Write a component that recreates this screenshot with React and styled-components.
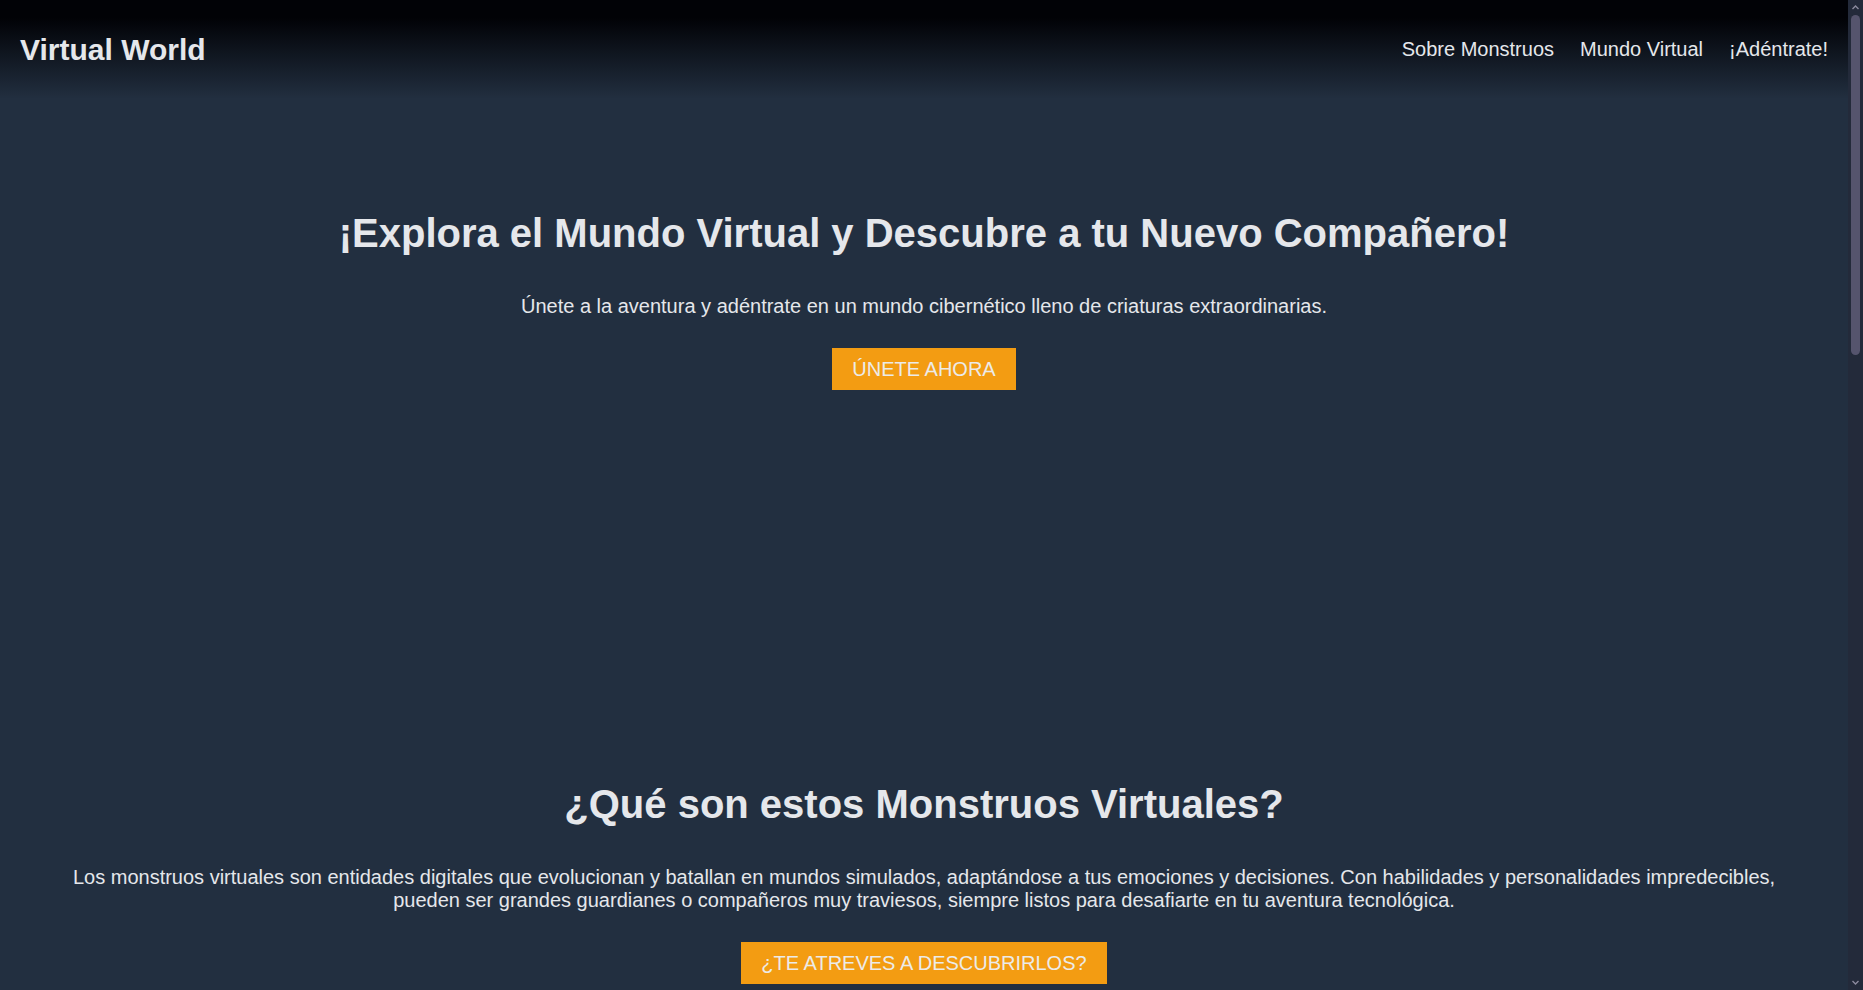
import React from "react";
import styled, { createGlobalStyle } from "styled-components";

const GlobalStyle = createGlobalStyle`
  html, body {
    margin: 0;
    height: 100%;
    overflow: hidden;
  }
  body {
    background-color: #222f40;
    color: #e5e7eb;
    font-family: "Liberation Sans", Arial, sans-serif;
  }
  * {
    box-sizing: border-box;
  }
`;

const Frame = styled.div`
  height: 100vh;
  display: flex;
  flex-direction: row;
  background-color: #222f40;
`;

const Page = styled.div`
  flex: 1;
  min-width: 0;
  height: 100%;
  overflow-y: auto;
  scrollbar-width: none;
  &::-webkit-scrollbar {
    display: none;
  }
`;

/* drawing of the browser's dark scrollbar seen in the screenshot */
const Rail = styled.div`
  width: 15px;
  height: 100%;
  flex-shrink: 0;
  display: flex;
  flex-direction: column;
  align-items: center;
  background-color: #232a3a;
`;

const RailArrow = styled.svg`
  width: 15px;
  height: 15px;
  flex-shrink: 0;
`;

const RailTrack = styled.div`
  flex: 1;
  width: 100%;
  padding: 0 3px;
`;

const Thumb = styled.div`
  width: 100%;
  height: ${(p) => p.$size}px;
  border-radius: 5px;
  background-color: #55546d;
`;

const Header = styled.header`
  height: 99px;
  padding: 0 20px;
  display: flex;
  flex-direction: row;
  align-items: center;
  justify-content: space-between;
  background: linear-gradient(to bottom, #010206 18%, rgba(1, 2, 6, 0) 100%);
`;

const Brand = styled.h1`
  margin: 0;
  font-size: 30px;
  font-weight: bold;
  color: #e5e7eb;
`;

const Nav = styled.nav`
  display: flex;
  flex-direction: row;
  gap: 26px;
`;

const NavLink = styled.a`
  font-size: 20px;
  color: #e5e7eb;
  text-decoration: none;
`;

const Hero = styled.section`
  min-height: 683px;
  padding: 112px 20px 0;
  display: flex;
  flex-direction: column;
  align-items: center;
  text-align: center;
`;

const Section = styled.section`
  min-height: ${(p) => p.$minHeight || "auto"};
  padding: ${(p) => p.$padding || "0 50px"};
  display: flex;
  flex-direction: column;
  align-items: center;
  text-align: center;
`;

const Title = styled.h2`
  margin: 0 0 39px;
  font-size: 40px;
  font-weight: bold;
  color: #e5e7eb;
`;

const Text = styled.p`
  margin: 0 0 30px;
  font-size: 20px;
  color: #e5e7eb;
`;

const Button = styled.button`
  border: none;
  border-radius: 0;
  padding: 9.6px 20px;
  background-color: #f39c12;
  color: #ecebe8;
  font-family: "Liberation Sans", Arial, sans-serif;
  font-size: 20px;
  cursor: pointer;
`;

const CardGrid = styled.div`
  width: 100%;
  max-width: 1200px;
  display: grid;
  grid-template-columns: repeat(3, 1fr);
  gap: 30px;
`;

const Card = styled.div`
  height: 300px;
  padding: 24px;
  background-color: #2b3a4f;
  display: flex;
  flex-direction: column;
  justify-content: flex-end;
  font-size: 20px;
`;

const Footer = styled.footer`
  height: 75px;
  display: flex;
  align-items: center;
  justify-content: center;
  font-size: 16px;
  color: #9ca3af;
  background: linear-gradient(to top, #010206, rgba(1, 2, 6, 0));
`;

const worlds = ["Bosque Binario", "Océano de Datos", "Ciudad Neón"];

function ScrollRail() {
  return (
    <Rail aria-hidden="true">
      <RailArrow viewBox="0 0 15 15">
        <path d="M4.5 9 L7.5 6 L10.5 9" fill="none" stroke="#8b8a9e" strokeWidth="1.4" />
      </RailArrow>
      <RailTrack>
        <Thumb $size={340} />
      </RailTrack>
      <RailArrow viewBox="0 0 15 15">
        <path d="M4.5 6 L7.5 9 L10.5 6" fill="none" stroke="#8b8a9e" strokeWidth="1.4" />
      </RailArrow>
    </Rail>
  );
}

export default function App() {
  return (
    <>
      <GlobalStyle />
      <Frame>
        <Page>
          <Header>
            <Brand>Virtual World</Brand>
            <Nav>
              <NavLink href="#monstruos">Sobre Monstruos</NavLink>
              <NavLink href="#mundo">Mundo Virtual</NavLink>
              <NavLink href="#adentrate">¡Adéntrate!</NavLink>
            </Nav>
          </Header>

          <Hero>
            <Title as="h1">¡Explora el Mundo Virtual y Descubre a tu Nuevo Compañero!</Title>
            <Text>Únete a la aventura y adéntrate en un mundo cibernético lleno de criaturas extraordinarias.</Text>
            <Button>ÚNETE AHORA</Button>
          </Hero>

          <Section id="monstruos" $padding="0 50px 120px">
            <Title>¿Qué son estos Monstruos Virtuales?</Title>
            <Text>
              Los monstruos virtuales son entidades digitales que evolucionan y batallan en mundos simulados, adaptándose a tus emociones y decisiones. Con habilidades y personalidades impredecibles, pueden ser grandes guardianes o compañeros muy traviesos, siempre listos para desafiarte en tu aventura tecnológica.
            </Text>
            <Button>¿TE ATREVES A DESCUBRIRLOS?</Button>
          </Section>

          <Section id="mundo" $minHeight="1000px" $padding="120px 50px">
            <Title>Mundo Virtual</Title>
            <Text>Recorre paisajes digitales donde cada rincón esconde un nuevo compañero.</Text>
            <CardGrid>
              {worlds.map((w) => (
                <Card key={w}>{w}</Card>
              ))}
            </CardGrid>
          </Section>

          <Section id="adentrate" $minHeight="600px" $padding="120px 50px">
            <Title>¡Adéntrate!</Title>
            <Text>Crea tu cuenta y recibe a tu primer monstruo virtual.</Text>
            <Button>COMENZAR</Button>
          </Section>

          <Footer>© Virtual World</Footer>
        </Page>
        <ScrollRail />
      </Frame>
    </>
  );
}
